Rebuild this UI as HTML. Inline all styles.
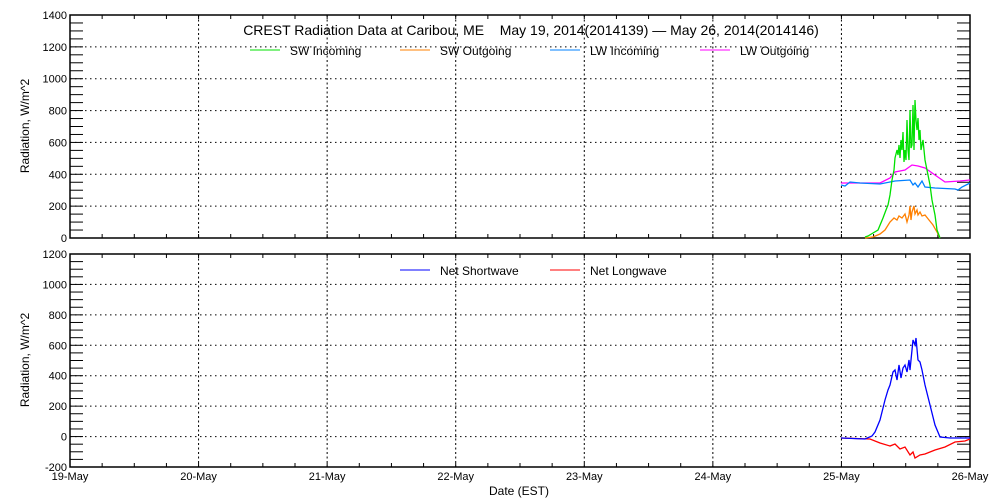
<!DOCTYPE html>
<html><head><meta charset="utf-8"><style>
html,body{margin:0;padding:0;background:#fff;}
svg{display:block;font-family:"Liberation Sans",sans-serif;}
</style></head><body>
<svg id="s" width="1000" height="500" xmlns="http://www.w3.org/2000/svg">
<rect width="1000" height="500" fill="#fff"/>
<g id="g"></g>
<text x="531" y="35" font-size="14" text-anchor="middle" style="white-space:pre" xml:space="preserve">CREST Radiation Data at Caribou, ME    May 19, 2014(2014139) — May 26, 2014(2014146)</text>
<line x1="250" y1="50" x2="280" y2="50" stroke="#00e000"/><text x="290" y="55" font-size="12">SW Incoming</text>
<line x1="400" y1="50" x2="430" y2="50" stroke="#ff8000"/><text x="440" y="55" font-size="12">SW Outgoing</text>
<line x1="550" y1="50" x2="580" y2="50" stroke="#0080ff"/><text x="590" y="55" font-size="12">LW Incoming</text>
<line x1="700" y1="50" x2="730" y2="50" stroke="#ff00ff"/><text x="740" y="55" font-size="12">LW Outgoing</text>
<line x1="400" y1="270" x2="430" y2="270" stroke="#0000ff"/><text x="440" y="275" font-size="12">Net Shortwave</text>
<line x1="550" y1="270" x2="580" y2="270" stroke="#ff0000"/><text x="590" y="275" font-size="12">Net Longwave</text>
<text transform="translate(29,126) rotate(-90)" font-size="12" text-anchor="middle">Radiation, W/m^2</text>
<text transform="translate(29,360) rotate(-90)" font-size="12" text-anchor="middle">Radiation, W/m^2</text>
<text x="519" y="495" font-size="12" text-anchor="middle">Date (EST)</text>
<polyline fill="none" stroke="#ff00ff" stroke-width="1.3" points="841,183 880,183 890,178 895,172 905,170 912,165 918,166 925,168 935,175 945,182 960,181 970,180"/>
<polyline fill="none" stroke="#0080ff" stroke-width="1.3" points="841,185 845,186 850,182 860,183 880,184 895,181 910,180 913,185 915,183 918,187 922,181 925,187 935,188 955,189 958,190 962,187 970,183"/>
<polyline fill="none" stroke="#ff8000" stroke-width="1.3" points="865,238 873,237 880,234 885,230 890,222 894,218 897,220 899,216 902,218 905,214 907,222 909,215 910,206 911,220 912,212 914,206 915,214 917,210 918,215 920,212 922,216 925,215 929,220 933,225 937,232 940,238"/>
<polyline fill="none" stroke="#00e000" stroke-width="1.3" points="865,237 868,236 873,233 878,230 883,218 886,210 888,205 890,195 892,180 894,170 895,158 897,150 898,155 899,145 900,158 901,140 902,150 903,132 904,162 905,150 906,160 907,120 908,150 909,160 910,110 911,148 912,145 913,105 914,150 915,100 916,120 917,130 918,118 919,140 920,130 921,150 922,145 923,140 925,160 927,170 930,185 932,200 935,215 937,230 940,238"/>
<polyline fill="none" stroke="#ff0000" stroke-width="1.3" points="841,438 870,439 880,443 890,446 895,444 900,449 905,447 910,455 913,452 915,458 920,455 925,454 935,450 945,447 955,442 965,441 970,439"/>
<polyline fill="none" stroke="#0000ff" stroke-width="1.3" points="841,438 865,439 872,436 875,432 880,420 885,400 888,390 890,385 893,372 895,370 897,380 899,365 901,378 903,368 905,365 907,372 909,360 910,370 912,350 913,340 915,345 916,338 918,360 920,362 922,370 925,385 930,405 935,425 940,437 950,438 970,438"/>
</svg>
<script>
var g=document.getElementById('g'),h='';
function L(x1,y1,x2,y2,e){h+='<line x1="'+x1+'" y1="'+y1+'" x2="'+x2+'" y2="'+y2+'" stroke="#000" '+(e||'')+'/>';}
function T(x,y,t,a){h+='<text x="'+x+'" y="'+y+'" font-size="11" text-anchor="'+(a||'end')+'">'+t+'</text>';}
function plot(top,bot,vmin,vmax){
 var sc=(bot-top)/(vmax-vmin);
 for(var v=vmin;v<=vmax;v+=200){var y=bot-(v-vmin)*sc;
  if(v>vmin&&v<vmax)L(70,y,970,y,'stroke-dasharray="1.5,3.5"');
  T(67,y+4,v);}
 for(var d=1;d<7;d++){var x=70+d*900/7;L(x,top,x,bot,'stroke-dasharray="2,2.5"');}
 for(var v=vmin;v<=vmax;v+=50){var y=bot-(v-vmin)*sc;L(70,y,83,y);L(957,y,970,y);}
 for(var i=1;i<28;i++){var x=70+i*900/28;L(x,top,x,top+4);L(x,bot,x,bot-4);}
 h+='<rect x="70" y="'+top+'" width="900" height="'+(bot-top)+'" fill="none" stroke="#000" stroke-width="1.5"/>';
}
plot(15,238,0,1400);plot(254,467,-200,1200);
var days=['19-May','20-May','21-May','22-May','23-May','24-May','25-May','26-May'];
for(var d=0;d<8;d++)T(70+d*900/7,480,days[d],'middle');
g.innerHTML=h;
</script>
</body></html>
